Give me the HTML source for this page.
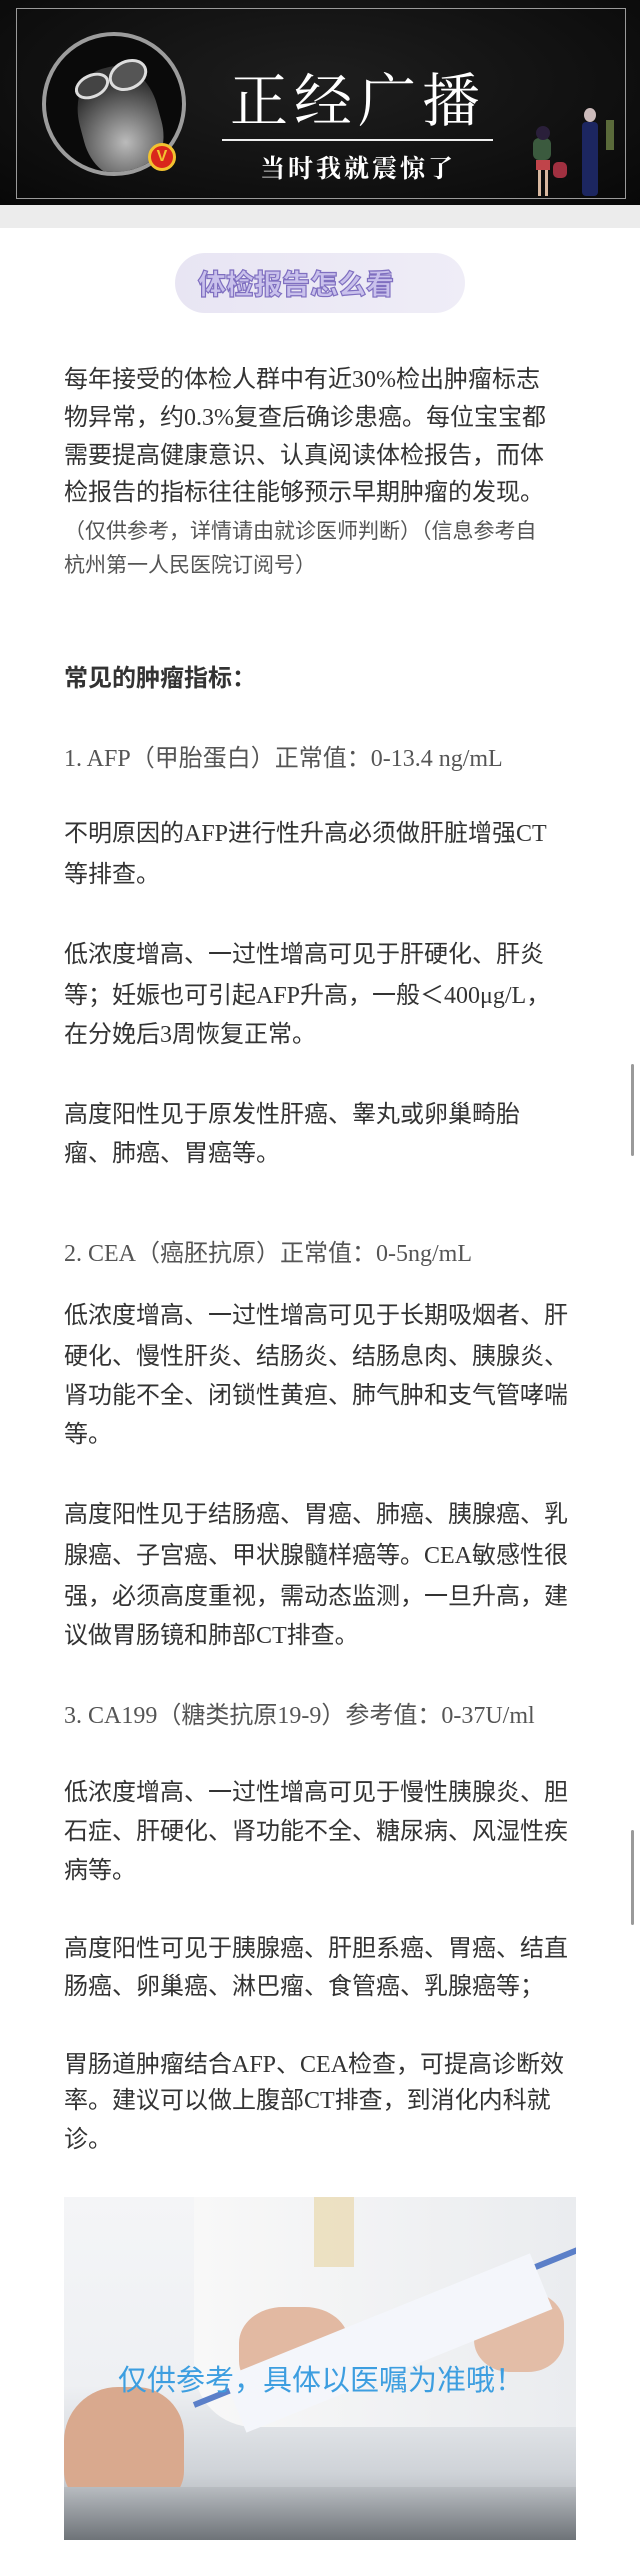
<!DOCTYPE html>
<html><head><meta charset="utf-8">
<style>
*{margin:0;padding:0;box-sizing:border-box}
body{width:640px;height:2559px;background:#fff;position:relative;overflow:hidden;font-family:"Liberation Serif","Noto Sans CJK SC",sans-serif;color:#333}
.l{position:absolute;left:64px;white-space:nowrap;font-size:24px;line-height:40px;height:40px}
.s{font-size:21px;color:#555}
.h{color:#555}
.b{font-weight:bold;font-family:"Noto Sans CJK SC",sans-serif;color:#333}
</style></head><body>
<!-- banner -->
<div style="position:absolute;left:0;top:0;width:640px;height:205px;background:radial-gradient(ellipse at 50% 40%,#1e1e1e,#080808)"></div>
<div style="position:absolute;left:16px;top:8px;width:610px;height:191px;border:1.5px solid #9a9a9a"></div>
<div style="position:absolute;left:42px;top:32px;width:144px;height:144px;border-radius:50%;border:4px solid #9c9c9c;background:#0a0a0a;overflow:hidden">
  <div style="position:absolute;left:34px;top:30px;width:80px;height:110px;border-radius:45% 45% 40% 40%;background:radial-gradient(circle at 50% 70%,#bbb 0,#777 35%,#333 70%);transform:rotate(-15deg)"></div>
  <div style="position:absolute;left:28px;top:38px;width:36px;height:24px;border-radius:50%;border:3px solid #ddd;background:#444;transform:rotate(-25deg)"></div>
  <div style="position:absolute;left:62px;top:24px;width:40px;height:30px;border-radius:50%;border:3px solid #ddd;background:#555;transform:rotate(-25deg)"></div>
</div>
<div style="position:absolute;left:148px;top:143px;width:28px;height:28px;border-radius:50%;background:#d9261c;border:3px solid #f2c230;color:#f2c230;font:bold 16px/22px 'Liberation Sans',sans-serif;text-align:center">V</div>
<div style="position:absolute;left:200px;top:64px;width:316px;text-align:center;color:#fff;font-size:58px;line-height:64px;font-family:'Noto Serif CJK SC',serif;letter-spacing:6px;white-space:nowrap">正经广播</div>
<div style="position:absolute;left:222px;top:139px;width:271px;height:2px;background:#eee"></div>
<div style="position:absolute;left:248px;top:150px;width:220px;text-align:center;color:#fff;font-size:25px;line-height:34px;font-weight:bold;font-family:'Noto Serif CJK SC',serif;letter-spacing:3px;white-space:nowrap">当时我就震惊了</div>
<!-- figures -->
<div style="position:absolute;left:533px;top:138px;width:18px;height:22px;background:#3b5a3e;border-radius:6px"></div>
<div style="position:absolute;left:536px;top:126px;width:14px;height:14px;background:#2a1f3a;border-radius:50%"></div>
<div style="position:absolute;left:536px;top:160px;width:14px;height:10px;background:#c0444a"></div>
<div style="position:absolute;left:538px;top:170px;width:3px;height:26px;background:#d8b8a0"></div>
<div style="position:absolute;left:545px;top:170px;width:3px;height:26px;background:#d8b8a0"></div>
<div style="position:absolute;left:553px;top:162px;width:14px;height:16px;background:#a03040;border-radius:5px"></div>
<div style="position:absolute;left:582px;top:122px;width:16px;height:74px;background:#1c2660;border-radius:4px"></div>
<div style="position:absolute;left:584px;top:108px;width:12px;height:14px;background:#cbb;border-radius:50%"></div>
<div style="position:absolute;left:606px;top:120px;width:8px;height:30px;background:#5a6a3a"></div>
<div style="position:absolute;left:0;top:205px;width:640px;height:23px;background:#ececec"></div>
<!-- pill -->
<div style="position:absolute;left:175px;top:253px;width:290px;height:60px;border-radius:30px;background:linear-gradient(90deg,#e8e5f3,#efedf7);"></div>
<div style="position:absolute;left:175px;top:253px;width:290px;height:60px;line-height:60px;padding-right:48px;text-align:center;font-family:'Noto Sans CJK SC',sans-serif;font-weight:900;font-size:28px;color:#c9c1ec;-webkit-text-stroke:1.2px #7f6fc0">体检报告怎么看</div>

<div class="l" style="top:360px">每年接受的体检人群中有近30%检出肿瘤标志</div>
<div class="l" style="top:398px">物异常，约0.3%复查后确诊患癌。每位宝宝都</div>
<div class="l" style="top:436px">需要提高健康意识、认真阅读体检报告，而体</div>
<div class="l" style="top:473px">检报告的指标往往能够预示早期肿瘤的发现。</div>
<div class="l s" style="top:511px">（仅供参考，详情请由就诊医师判断）（信息参考自</div>
<div class="l s" style="top:545px">杭州第一人民医院订阅号）</div>
<div class="l b" style="top:656px">常见的肿瘤指标：</div>

<div class="l h" style="top:739px">1. AFP（甲胎蛋白）正常值：0-13.4 ng/mL</div>
<div class="l" style="top:814px">不明原因的AFP进行性升高必须做肝脏增强CT</div>
<div class="l" style="top:855px">等排查。</div>
<div class="l" style="top:935px">低浓度增高、一过性增高可见于肝硬化、肝炎</div>
<div class="l" style="top:976px">等；妊娠也可引起AFP升高，一般＜400μg/L，</div>
<div class="l" style="top:1015px">在分娩后3周恢复正常。</div>
<div class="l" style="top:1095px">高度阳性见于原发性肝癌、睾丸或卵巢畸胎</div>
<div class="l" style="top:1134px">瘤、肺癌、胃癌等。</div>

<div class="l h" style="top:1234px">2. CEA（癌胚抗原）正常值：0-5ng/mL</div>
<div class="l" style="top:1296px">低浓度增高、一过性增高可见于长期吸烟者、肝</div>
<div class="l" style="top:1337px">硬化、慢性肝炎、结肠炎、结肠息肉、胰腺炎、</div>
<div class="l" style="top:1376px">肾功能不全、闭锁性黄疸、肺气肿和支气管哮喘</div>
<div class="l" style="top:1415px">等。</div>
<div class="l" style="top:1495px">高度阳性见于结肠癌、胃癌、肺癌、胰腺癌、乳</div>
<div class="l" style="top:1536px">腺癌、子宫癌、甲状腺髓样癌等。CEA敏感性很</div>
<div class="l" style="top:1577px">强，必须高度重视，需动态监测，一旦升高，建</div>
<div class="l" style="top:1616px">议做胃肠镜和肺部CT排查。</div>

<div class="l h" style="top:1696px">3. CA199（糖类抗原19-9）参考值：0-37U/ml</div>
<div class="l" style="top:1773px">低浓度增高、一过性增高可见于慢性胰腺炎、胆</div>
<div class="l" style="top:1812px">石症、肝硬化、肾功能不全、糖尿病、风湿性疾</div>
<div class="l" style="top:1851px">病等。</div>
<div class="l" style="top:1929px">高度阳性可见于胰腺癌、肝胆系癌、胃癌、结直</div>
<div class="l" style="top:1967px">肠癌、卵巢癌、淋巴瘤、食管癌、乳腺癌等；</div>
<div class="l" style="top:2045px">胃肠道肿瘤结合AFP、CEA检查，可提高诊断效</div>
<div class="l" style="top:2081px">率。建议可以做上腹部CT排查，到消化内科就</div>
<div class="l" style="top:2120px">诊。</div>

<!-- scrollbars -->
<div style="position:absolute;left:631px;top:1064px;width:3px;height:92px;background:#9a9a9a;border-radius:2px"></div>
<div style="position:absolute;left:631px;top:1830px;width:3px;height:95px;background:#9a9a9a;border-radius:2px"></div>

<!-- image -->
<div style="position:absolute;left:64px;top:2197px;width:512px;height:343px;overflow:hidden;background:linear-gradient(180deg,#f4f5f7 0%,#eef0f3 55%,#cfd3d8 80%,#9ea3a8 100%)">
  <div style="position:absolute;left:130px;top:0;width:382px;height:230px;background:linear-gradient(90deg,#f8f8f8,#eaecef);border-radius:0 0 0 60px"></div>
  <div style="position:absolute;left:250px;top:0;width:40px;height:70px;background:#e8d3a0;opacity:.6"></div>
  <div style="position:absolute;left:0;top:190px;width:120px;height:120px;background:#d9a98e;border-radius:45% 40% 30% 30%"></div>
  <div style="position:absolute;left:175px;top:110px;width:110px;height:90px;background:#e2b9a2;border-radius:40%"></div>
  <div style="position:absolute;left:410px;top:95px;width:90px;height:80px;background:#e3bda7;border-radius:40%"></div>
  <div style="position:absolute;left:130px;top:205px;width:420px;height:6px;background:#5b7fc8;transform:rotate(-22deg);transform-origin:left center"></div>
  <div style="position:absolute;left:160px;top:180px;width:330px;height:60px;background:#f4f6fb;transform:rotate(-22deg);transform-origin:left top"></div>
  <div style="position:absolute;left:0;top:290px;width:512px;height:53px;background:linear-gradient(180deg,#b8bcc1,#6e7378)"></div>
</div>
<div style="position:absolute;left:118px;top:2358px;width:420px;text-align:left;font-family:'Noto Sans CJK SC',sans-serif;font-size:29px;line-height:40px;color:#3d9ee0;white-space:nowrap">仅供参考，具体以医嘱为准哦！</div>
</body></html>
